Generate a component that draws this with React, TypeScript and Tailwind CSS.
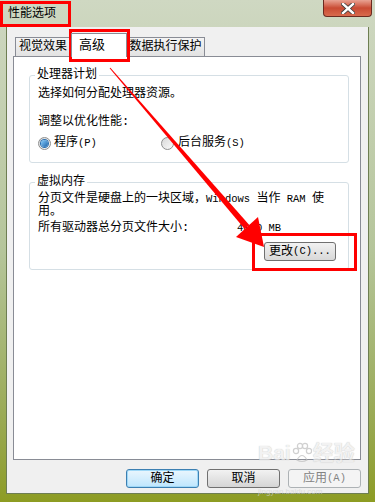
import React from "react";

const cjk = "font-['SimSun','Liberation_Mono','Noto_Sans_CJK_SC',monospace]";

// half-width latin runs, as the dialog font draws them
const L = ({ children }: { children: React.ReactNode }) => (
  <span className="text-[10.5px]">{children}</span>
);

const Radio = ({ checked }: { checked?: boolean }) => (
  <span className="relative inline-flex h-[13px] w-[13px] items-center justify-center rounded-full border border-[#8e8f8f] bg-gradient-to-br from-[#d8d8d8] to-[#fbfbfb]">
    {checked && (
      <span className="h-[7px] w-[7px] rounded-full bg-gradient-to-br from-[#8ad0ff] to-[#1a63a8] shadow-[0_0_0_1px_#2a6fb0]" />
    )}
  </span>
);

const Btn = ({
  children,
  focused,
  disabled,
}: {
  children: React.ReactNode;
  focused?: boolean;
  disabled?: boolean;
}) => (
  <div
    className={`flex h-[19px] w-[73px] items-center justify-center rounded-[3px] border text-[12px] leading-none ${
      focused
        ? "border-[#3c7fb1] bg-gradient-to-b from-[#eaf6fd] to-[#bee6fd] shadow-[inset_0_0_0_1px_#9fd8f7]"
        : disabled
          ? "border-[#adb2b5] bg-[#f4f4f4] text-[#838383]"
          : "border-[#707070] bg-gradient-to-b from-[#f2f2f2] to-[#d5d5d5]"
    }`}
  >
    {children}
  </div>
);

// faint paw mark of the watermark
const Paw = () => (
  <svg width="20" height="22" viewBox="0 0 20 22" className="mx-[1px]">
    <g fill="none" stroke="#bdbdbd" strokeWidth="1.2">
      <circle cx="4" cy="9" r="2.6" />
      <circle cx="8" cy="4" r="2.6" />
      <circle cx="13" cy="4" r="2.6" />
      <circle cx="17" cy="9" r="2.6" />
      <path d="M5 18 Q10 9 15 18 Q10 21 5 18 Z" />
    </g>
  </svg>
);

export default function App() {
  return (
    <div
      className={`relative flex h-[502px] w-[375px] flex-col overflow-hidden bg-gradient-to-b from-[#cfd8c2] via-[#b5c59a] to-[#8d9c22] text-black ${cjk}`}
    >
      {/* title bar */}
      <div className="flex h-[27px] items-start justify-between">
        <span className="pl-[8px] pt-[6px] text-[12px] leading-[16px]">性能选项</span>
        <div className="mr-[3px] flex h-[17px] w-[49px] items-center justify-center rounded-b-[4px] border border-t-0 border-[#6b2a20] bg-gradient-to-b from-[#e8a293] via-[#c94a33] to-[#d86a4d]">
          <svg width="14" height="11" viewBox="0 0 14 11">
            <path
              d="M2 1 L12 10 M12 1 L2 10"
              stroke="#3a3a3a"
              strokeWidth="4"
              strokeLinecap="square"
            />
            <path
              d="M2 1 L12 10 M12 1 L2 10"
              stroke="#ffffff"
              strokeWidth="2.4"
              strokeLinecap="square"
            />
          </svg>
        </div>
      </div>

      {/* client area */}
      <div className="mx-[6px] flex h-[467px] flex-col border border-t-0 border-[#6e7e52] bg-[#f0f0f0] pl-[6px] pr-[7px]">
        {/* tabs */}
        <div className="ml-[2px] mt-[6px] flex h-[23px] items-end">
          <div className="flex h-[19px] w-[56px] items-center justify-center border border-b-0 border-[#898c95] bg-gradient-to-b from-[#f4f4f4] to-[#e2e2e2] text-[12px]">
            视觉效果
          </div>
          <div className="relative z-10 -mb-px flex h-[24px] w-[56px] items-start justify-start border border-b-0 border-[#898c95] bg-white pl-[7px] pt-[2px] text-[13px]">
            高级
          </div>
          <div className="flex h-[19px] w-[78px] items-center justify-center border border-b-0 border-l-0 border-[#898c95] bg-gradient-to-b from-[#f4f4f4] to-[#e2e2e2] text-[12px]">
            数据执行保护
          </div>
        </div>

        {/* tab panel */}
        <div className="flex h-[404px] flex-col border border-[#898c95] bg-white pl-[15px] text-[12px]">
          <fieldset className="mt-[11px] w-[320px] rounded-[3px] border border-[#d5dfe5] pb-[11px] pl-[5px]">
            <legend className="px-[2px] leading-[14px]">处理器计划</legend>
            <div className="pl-[3px]">
              <div className="pt-[4px] leading-[16px]">选择如何分配处理器资源。</div>
              <div className="mt-[12px] leading-[16px]">调整以优化性能:</div>
              <div className="mt-[5px] flex h-[16px] items-center">
                <div className="flex w-[123px] items-center gap-[3px]">
                  <Radio checked />
                  <span>
                    程序<L>(P)</L>
                  </span>
                </div>
                <div className="flex items-center gap-[4px]">
                  <Radio />
                  <span>
                    后台服务<L>(S)</L>
                  </span>
                </div>
              </div>
            </div>
          </fieldset>

          <fieldset className="mt-[12px] w-[320px] rounded-[3px] border border-[#d5dfe5] pb-[8px] pl-[5px]">
            <legend className="px-[2px] leading-[14px]">虚拟内存</legend>
            <div className="pl-[3px]">
              <div className="whitespace-nowrap pt-[4px] leading-[13px]">
                分页文件是硬盘上的一块区域，<L>Windows </L>当作<L> RAM </L>使
                <br />
                用。
              </div>
              <div className="mt-[3px] flex leading-[13px]">
                <span className="w-[199px]">所有驱动器总分页文件大小:</span>
                <L>4070 MB</L>
              </div>
              <div className="mt-[7px] flex justify-end pr-[12px]">
                <div className="flex h-[19px] w-[72px] items-center justify-center rounded-[3px] border border-[#707070] bg-gradient-to-b from-[#f2f2f2] to-[#d8d8d8] leading-none">
                  更改<L>(C)...</L>
                </div>
              </div>
            </div>
          </fieldset>
        </div>

        {/* dialog buttons */}
        <div className="mt-[9px] flex justify-end gap-[8px]">
          <Btn focused>确定</Btn>
          <Btn>取消</Btn>
          <Btn disabled>
            应用<L>(A)</L>
          </Btn>
        </div>
      </div>

      {/* baidu watermark */}
      <div className="pointer-events-none absolute left-[258px] top-[441px] flex flex-col font-['Liberation_Sans','Noto_Sans_CJK_SC',sans-serif] text-[#ededed] opacity-70">
        <span className="flex items-center text-[21px] font-bold leading-[24px] [text-shadow:0_0_1px_#a8a8a8]">
          Bai
          <Paw />
          经验
        </span>
        <span className="mt-[22px] text-[8px] leading-[9px] text-[#d4d4d4]">jingyan.baidu.com</span>
      </div>

      {/* annotation overlays */}
      <div className="pointer-events-none absolute left-0 top-[1px] h-[26px] w-[71px] border-[3px] border-[#ff0000]" />
      <div className="pointer-events-none absolute left-[69px] top-[29px] h-[33px] w-[61px] border-[3px] border-[#ff0000]" />
      <div className="pointer-events-none absolute left-[252px] top-[233px] h-[38px] w-[105px] border-[3px] border-[#ff0000]" />
      <svg className="pointer-events-none absolute left-0 top-0" width="375" height="502">
        <polygon points="109.6,68.3 110.4,67.7 249.3,225 244.7,229" fill="#ff0000" />
        <polygon points="236,237 258,217 264,247" fill="#ff0000" />
      </svg>
    </div>
  );
}
